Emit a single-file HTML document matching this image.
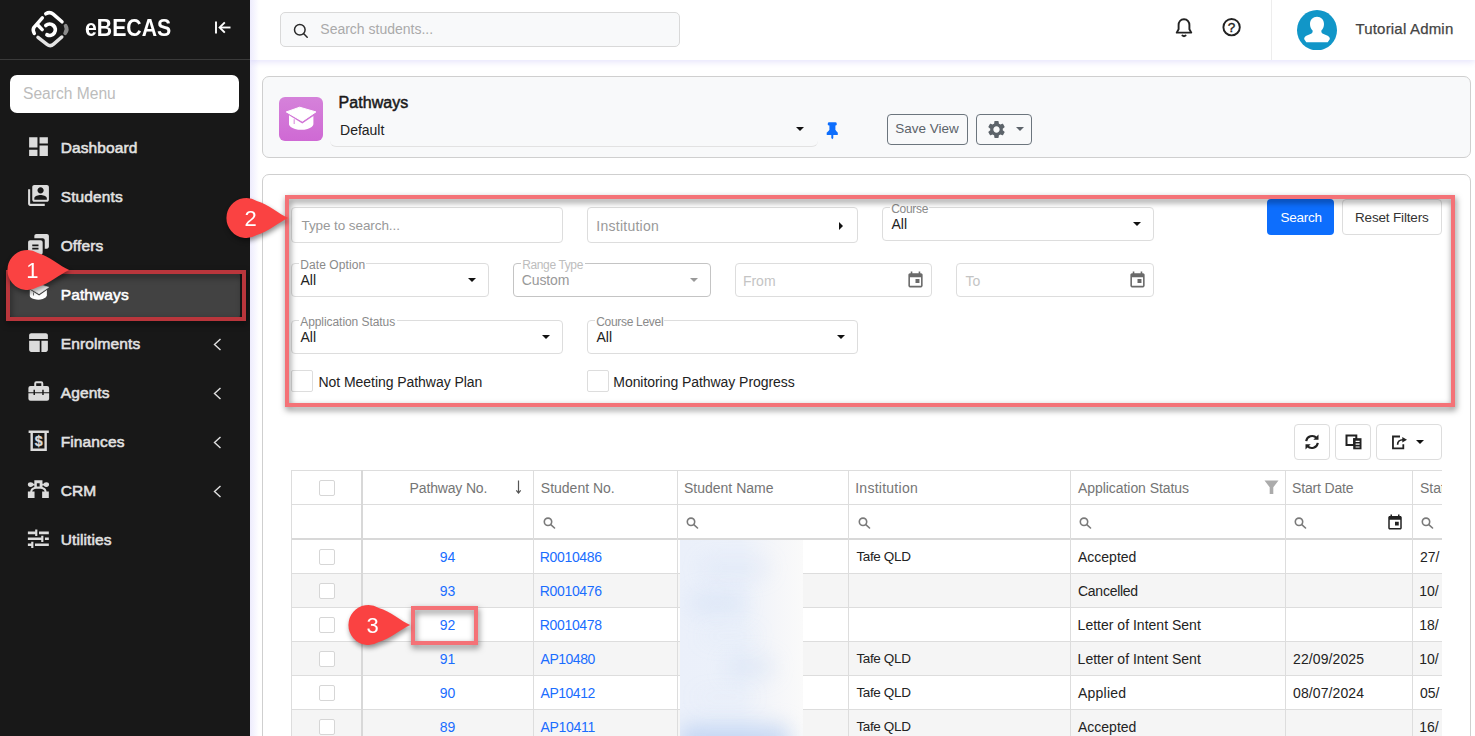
<!DOCTYPE html>
<html lang="en">
<head>
<meta charset="utf-8">
<title>eBECAS - Pathways</title>
<style>
*{box-sizing:border-box;margin:0;padding:0}
html,body{width:1475px;height:736px;overflow:hidden;background:#fff;font-family:"Liberation Sans",sans-serif;}
.abs{position:absolute}
.t{position:absolute;white-space:nowrap;line-height:1}
#sidebar{position:absolute;left:0;top:0;width:250px;height:736px;background:#181818;overflow:hidden}
#sidebar .hdrline{position:absolute;left:0;top:59px;width:250px;height:1px;background:#3a3a3a}
#smenu{position:absolute;left:10px;top:75px;width:229px;height:38px;background:#fff;border-radius:7px;}
.mi{position:absolute;left:60.700px;font-weight:normal;font-size:15.500px;color:#e2e2e2;-webkit-text-stroke:0.550px #e2e2e2;white-space:nowrap;line-height:1;letter-spacing:0.120px}
.ico{position:absolute;left:25.700px;width:25px;height:25px;fill:#dcdcdc}
.chev{position:absolute;left:213px;width:9px;height:13px;fill:none;stroke:#e0e0e0;stroke-width:1.4}
#active{position:absolute;left:10px;top:272px;width:230px;height:47px;background:#424242;border-radius:4px}
#main{position:absolute;left:250px;top:0;width:1225px;height:736px;background:#fff;overflow:hidden}

#topbar{position:absolute;left:0;top:0;width:1225px;height:60px;background:#fff;box-shadow:0 2px 6px rgba(120,110,240,0.19);}
#sbshadow{position:absolute;left:0;top:0;width:9px;height:736px;background:linear-gradient(to right,rgba(120,110,240,0.13),rgba(120,110,240,0));}
#search{position:absolute;left:30px;top:12px;width:400px;height:35px;border:1px solid #d9d9d9;border-radius:5px;background:#f8f9fa}
.card{position:absolute;border:1px solid #cfcfcf;border-radius:7px}
.btn{position:absolute;border-radius:4px}
.fld{position:absolute;border:1px solid #ddd;border-radius:4px;background:#fff}
.lbl{position:absolute;white-space:nowrap;line-height:1;font-size:12px;color:#8a8a8a;background:#fff;padding:0 1px}
.val{position:absolute;white-space:nowrap;line-height:1;font-size:14px;color:#222}
.caret{position:absolute;width:0;height:0;border-left:4px solid transparent;border-right:4px solid transparent;border-top:4.500px solid #111}
.cb{position:absolute;width:22px;height:22px;border:1px solid #ddd;border-radius:2px;background:#fff}

.hl{position:absolute;left:0;width:1200px;height:1px;background:#ddd}
.vl{position:absolute;top:0;width:1px;height:300px;background:#ddd}
.lnk{color:#1a6dff}
.dk{color:#232323}

.ann{position:absolute;border:4px solid #f47277;filter:drop-shadow(1px 3px 3px rgba(0,0,0,0.5));pointer-events:none}
.badge{position:absolute;width:70px;height:48px;overflow:visible;filter:drop-shadow(1px 3px 2.500px rgba(0,0,0,0.42))}
</style>
</head>
<body>
<div id="main">
  <div id="topbar">
    <div id="search">
      <svg class="abs" style="left:11.500px;top:9.500px" width="16" height="16" viewBox="0 0 16 16" fill="none" stroke="#2a2a2a" stroke-width="1.500" stroke-linecap="round"><circle cx="6.800" cy="6.800" r="5.300"/><path d="M10.800 10.800 L14.200 14.200"/></svg>
      <div class="t" id="sst" style="left:39.30px;top:8.700px;font-size:14px;color:#aaa;letter-spacing:0.000px">Search students...</div>
    </div>
    <svg class="abs" style="left:924px;top:16.500px" width="20" height="22" viewBox="0 0 20 22" fill="none" stroke="#222" stroke-width="1.900" stroke-linejoin="round" stroke-linecap="round"><path d="M10 2.300 C6.400 2.300 4.600 5 4.600 8 V12.300 L2.700 15.600 H17.300 L15.400 12.300 V8 C15.400 5 13.600 2.300 10 2.300 Z"/><path d="M8.400 18.600 Q10 19.800 11.600 18.600"/></svg>
    <svg class="abs" style="left:971px;top:17px" width="22" height="22" viewBox="0 0 22 22"><circle cx="10.600" cy="10.200" r="8.200" fill="none" stroke="#222" stroke-width="1.900"/><text x="10.600" y="14.900" font-family="Liberation Sans, sans-serif" font-size="13.500" text-anchor="middle" fill="#222" stroke="#222" stroke-width="0.400">?</text></svg>
    <div class="abs" style="left:1021px;top:0;width:1px;height:60px;background:#ededed"></div>
    <svg class="abs" style="left:1047.100px;top:10px" width="40" height="40.400" viewBox="0 0 40 40.400"><ellipse cx="20" cy="20.200" rx="20" ry="20.200" fill="#1196c8"/><path d="M20 6.700c-4 0-7 3-7 7.200 0 2.600 1 5 2.600 6.600.3 1.400-.3 2.600-1.600 3.300-2.200 1-5 1.600-6.400 3.400l-.5 1.800 2.200 3.300h21.400l2.200-3.300-.5-1.800c-1.400-1.800-4.200-2.400-6.400-3.400-1.300-.7-1.900-1.900-1.600-3.300 1.600-1.600 2.600-4 2.600-6.600 0-4.200-3-7.200-7-7.200z" fill="#fff"/></svg>
    <div class="t" id="tadmin" style="left:1105.40px;top:21px;font-size:15px;color:#444;letter-spacing:0.195px;-webkit-text-stroke:0.250px #444">Tutorial Admin</div>
  </div>

  <div id="sbshadow"></div>
  <div class="card" id="card1" style="left:12px;top:76px;width:1209px;height:82px;background:#f8f9fa">
    <div class="abs" style="left:16px;top:20px;width:44px;height:44px;border-radius:6px;background:linear-gradient(#d582da,#cf69d4)"></div>
    <svg class="abs" style="left:12px;top:16px" width="52" height="52" viewBox="0 0 52 52"><path d="M11.300 18.900 L24.700 14.200 L40.900 18.900 L27.300 28.200 Z" fill="#fff" stroke="#fff" stroke-width="1" stroke-linejoin="round"/><path d="M14 22.200 L27.300 30.600 L38.400 23 V31.200 Q37.800 34.200 32.500 35.900 Q26.200 37.800 20 35.900 Q14.600 34.200 14 31.400 Z" fill="#fff"/><path d="M18.700 26.300 h0.900 v4.600 h-0.900z" fill="#d373d7"/></svg>
    <div class="t" id="ptitle" style="left:75.60px;top:17.700px;font-size:16px;font-weight:normal;-webkit-text-stroke:0.500px #1a1a1a;color:#1a1a1a;letter-spacing:0.059px">Pathways</div>
    <div class="abs" style="left:67px;top:36px;width:488px;height:34px;border-bottom:1px solid #e2e2e2;border-radius:0 0 6px 6px"></div>
    <div class="t" id="pdef" style="left:77.10px;top:45.500px;font-size:14px;color:#222;letter-spacing:-0.028px">Default</div>
    <div class="caret" style="left:533px;top:50px"></div>
    <svg class="abs" style="left:563px;top:44px" width="13" height="19" viewBox="0 0 13 19" fill="#0d6efd"><rect x="1.800" y="1.200" width="8.900" height="3.400" rx="1.400"/><rect x="3.400" y="3" width="6" height="8"/><path d="M3.400 9 L0.700 11.800 V13.400 Q0.700 14 1.300 14 H11.200 Q11.800 14 11.800 13.400 V11.800 L9.400 9 Z"/><path d="M5.300 14 H7.300 V17 L6.300 18.300 L5.300 17 Z"/></svg>
    <div class="btn" style="left:624px;top:36.500px;width:81px;height:31px;border:1px solid #6c757d;"><div class="t" id="svt" style="left:7.20px;top:7.500px;font-size:13.500px;color:#5c636a;letter-spacing:0.000px">Save View</div></div>
    <div class="btn" style="left:713px;top:36.500px;width:56px;height:31px;border:1px solid #6c757d;">
      <svg class="abs" style="left:9px;top:4.500px" width="21" height="21" viewBox="0 0 24 24" fill="#5c636a"><path d="M19.140 12.940c.04-.3.060-.61.060-.94 0-.32-.02-.64-.07-.94l2.030-1.580a.49.490 0 0 0 .12-.61l-1.920-3.320a.488.488 0 0 0-.59-.22l-2.390.96c-.5-.38-1.030-.7-1.620-.94l-.36-2.540a.484.484 0 0 0-.48-.41h-3.840c-.24 0-.43.170-.47.410l-.36 2.540c-.59.240-1.130.57-1.620.94l-2.390-.96c-.22-.08-.47 0-.59.220L2.740 8.870c-.12.210-.08.470.12.610l2.030 1.580c-.05.300-.09.630-.09.940s.02.640.07.940l-2.030 1.580a.49.490 0 0 0-.12.610l1.920 3.320c.12.220.37.290.59.220l2.390-.96c.5.380 1.030.7 1.620.94l.36 2.540c.05.240.24.410.48.410h3.840c.24 0 .44-.17.470-.41l.36-2.540c.59-.24 1.130-.56 1.620-.94l2.390.96c.22.080.47 0 .59-.22l1.920-3.320c.12-.22.070-.47-.12-.61l-2.010-1.580zM12 15.600c-1.980 0-3.600-1.620-3.600-3.600s1.620-3.600 3.600-3.600 3.600 1.620 3.600 3.600-1.620 3.600-3.600 3.600z"/></svg>
      <div class="caret" style="left:38.500px;top:12.500px;border-top-color:#5c636a"></div>
    </div>
  </div>

  <div class="card" id="card2" style="left:12px;top:174px;width:1209px;height:600px;background:#fff">
  </div>
<!--BODYFRAG-->
<!-- filters -->
<div class="fld" style="left:41px;top:207px;width:272px;height:36px;"><div class="t" id="f_tts" style="left:9.50px;top:10.500px;font-size:13.500px;color:#999;letter-spacing:-0.088px">Type to search...</div></div>
<div class="fld" style="left:337px;top:207px;width:271px;height:36px;"><div class="t" id="f_inst" style="left:8.30px;top:10.500px;font-size:14px;color:#999;letter-spacing:0.260px">Institution</div><div class="abs" style="left:251px;top:13.500px;width:0;height:0;border-top:4px solid transparent;border-bottom:4px solid transparent;border-left:4.500px solid #111"></div></div>
<div class="fld" style="left:632px;top:207px;width:272px;height:34px;"><div class="abs" style="left:6.500px;top:-1px;width:39.5px;height:1px;background:#fff"></div><div class="t" id="l_course" style="left:8.200px;top:-5.200px;font-size:12px;letter-spacing:-0.3px;color:#8a8a8a">Course</div><div class="t" id="v_course" style="left:8.5px;top:9px;font-size:14px;letter-spacing:0px;color:#222">All</div><div class="caret" style="left:250px;top:14px;border-top-color:#111"></div></div>
<div class="fld" style="left:41px;top:263px;width:198px;height:34px;"><div class="abs" style="left:6.500px;top:-1px;width:67.5px;height:1px;background:#fff"></div><div class="t" id="l_dateopt" style="left:8.200px;top:-5.200px;font-size:12px;letter-spacing:0.1px;color:#8a8a8a">Date Option</div><div class="t" id="v_dateopt" style="left:8.5px;top:9px;font-size:14px;letter-spacing:0px;color:#222">All</div><div class="caret" style="left:176px;top:14px;border-top-color:#111"></div></div>
<div class="fld" style="left:263px;top:263px;width:198px;height:34px;border-color:#c4c4c4;"><div class="abs" style="left:6.500px;top:-1px;width:64.5px;height:1px;background:#fff"></div><div class="t" id="l_range" style="left:8.200px;top:-5.200px;font-size:12px;letter-spacing:-0.37px;color:#bdbdbd">Range Type</div><div class="t" id="v_range" style="left:7.8px;top:9px;font-size:14px;letter-spacing:-0.14px;color:#999">Custom</div><div class="caret" style="left:176px;top:14px;border-top-color:#999"></div></div>
<div class="fld" style="left:485px;top:263px;width:197px;height:34px;"><div class="t" id="f_from" style="left:6.90px;top:9.500px;font-size:14px;color:#c4c4c4;letter-spacing:0.000px">From</div><svg class="abs" style="left:170px;top:6px" width="19" height="19" viewBox="0 0 24 24" fill="#6a6a6a"><path d="M19 4h-1V2h-2v2H8V2H6v2H5c-1.110 0-1.990.9-1.990 2L3 20c0 1.100.89 2 2 2h14c1.100 0 2-.9 2-2V6c0-1.100-.9-2-2-2zm0 16H5V9h14v11zm-7-8.500h5v5h-5z" transform="translate(0,0)"/></svg></div>
<div class="fld" style="left:706px;top:263px;width:198px;height:34px;"><div class="t" id="f_to" style="left:8.50px;top:9.500px;font-size:14px;color:#c4c4c4;letter-spacing:0.000px">To</div><svg class="abs" style="left:171px;top:6px" width="19" height="19" viewBox="0 0 24 24" fill="#6a6a6a"><path d="M19 4h-1V2h-2v2H8V2H6v2H5c-1.110 0-1.990.9-1.990 2L3 20c0 1.100.89 2 2 2h14c1.100 0 2-.9 2-2V6c0-1.100-.9-2-2-2zm0 16H5V9h14v11zm-7-8.500h5v5h-5z" transform="translate(0,0)"/></svg></div>
<div class="fld" style="left:41px;top:320px;width:272px;height:34px;"><div class="abs" style="left:6.500px;top:-1px;width:98.5px;height:1px;background:#fff"></div><div class="t" id="l_appst" style="left:8.200px;top:-5.200px;font-size:12px;letter-spacing:-0.06px;color:#8a8a8a">Application Status</div><div class="t" id="v_appst" style="left:8.5px;top:9px;font-size:14px;letter-spacing:0px;color:#222">All</div><div class="caret" style="left:250px;top:14px;border-top-color:#111"></div></div>
<div class="fld" style="left:337px;top:320px;width:271px;height:34px;"><div class="abs" style="left:6.500px;top:-1px;width:69.9px;height:1px;background:#fff"></div><div class="t" id="l_clevel" style="left:8.200px;top:-5.200px;font-size:12px;letter-spacing:-0.3px;color:#8a8a8a">Course Level</div><div class="t" id="v_clevel" style="left:8.5px;top:9px;font-size:14px;letter-spacing:0px;color:#222">All</div><div class="caret" style="left:249px;top:14px;border-top-color:#111"></div></div>
<div class="cb" style="left:41px;top:370px"></div><div class="t" id="c_nm" style="left:68.50px;top:375px;font-size:14px;color:#222;letter-spacing:-0.052px">Not Meeting Pathway Plan</div>
<div class="cb" style="left:337px;top:370px"></div><div class="t" id="c_mp" style="left:363.30px;top:375px;font-size:14px;color:#222;letter-spacing:-0.054px">Monitoring Pathway Progress</div>
<div class="btn" style="left:1017px;top:199px;width:67px;height:36px;background:#0d6efd"><div class="t" id="b_search" style="left:13.50px;top:11.500px;font-size:13.500px;color:#fff;letter-spacing:-0.240px">Search</div></div>
<div class="btn" style="left:1092px;top:199px;width:100px;height:36px;background:#fff;border:1px solid #ddd"><div class="t" id="b_reset" style="left:12.00px;top:10.500px;font-size:13.500px;color:#333;letter-spacing:-0.167px">Reset Filters</div></div>
<!-- toolbar -->
<div class="btn" style="left:1044px;top:424px;width:36px;height:36px;background:#fff;border:1px solid #ddd"><svg class="abs" style="left:9px;top:8.600px" width="16" height="16" viewBox="0 0 16 16" fill="none" stroke="#222" stroke-width="2.100"><path d="M2.200 7.200 A6 6 0 0 1 12.600 4"/><path d="M13.800 8.800 A6 6 0 0 1 3.400 12"/><path d="M14.500 0.600 V5.800 H9.300 Z" fill="#222" stroke="none"/><path d="M1.500 15.400 V10.200 H6.700 Z" fill="#222" stroke="none"/></svg></div>
<div class="btn" style="left:1085px;top:424px;width:36px;height:36px;background:#fff;border:1px solid #ddd"><svg class="abs" style="left:8.600px;top:9.400px" width="18" height="17" viewBox="0 0 18 17"><path d="M1.500 1.500h9.800v9.500H1.500z" fill="none" stroke="#222" stroke-width="2"/><path d="M8.200 4.200h8.300v11.100H8.200z" fill="#222"/><path d="M8.200 4.200h3.100v6.800H8.200z" fill="#222"/><path d="M10.600 6.800h4v1.200h-4zM10.600 9.600h4v1.200h-4zM10.600 12.400h4v1.200h-4z" fill="#fff"/></svg></div>
<div class="btn" style="left:1126px;top:424px;width:66px;height:36px;background:#fff;border:1px solid #ddd"><svg class="abs" style="left:14px;top:9.500px" width="17" height="15" viewBox="0 0 17 15" fill="none" stroke="#222" stroke-width="1.800"><path d="M9 1.500H1.960V13.400H12.300V9.300"/><path d="M6.600 9.800C6.600 6.500 8.500 4.750 12 4.750" stroke-width="1.700"/><path d="M11.300 2.100L16 4.750 11.300 7.400z" fill="#222" stroke="none"/></svg><div class="caret" style="left:38.500px;top:14.500px"></div></div>
<!-- table -->
<div id="grid" style="position:absolute;left:41px;top:470px;width:1151px;height:280px;overflow:hidden;font-size:14px">
<div class="abs" style="left:0;top:70px;width:1151px;height:34px;background:#fff"></div>
<div class="abs" style="left:0;top:104px;width:1151px;height:34px;background:#f5f5f5"></div>
<div class="abs" style="left:0;top:138px;width:1151px;height:34px;background:#fff"></div>
<div class="abs" style="left:0;top:172px;width:1151px;height:34px;background:#f5f5f5"></div>
<div class="abs" style="left:0;top:206px;width:1151px;height:34px;background:#fff"></div>
<div class="abs" style="left:0;top:240px;width:1151px;height:34px;background:#f5f5f5"></div>
<div class="hl" style="top:0px"></div>
<div class="hl" style="top:34px"></div>
<div class="hl" style="top:68px;height:2px;background:#d8d8d8"></div>
<div class="hl" style="top:103px"></div>
<div class="hl" style="top:137px"></div>
<div class="hl" style="top:171px"></div>
<div class="hl" style="top:205px"></div>
<div class="hl" style="top:239px"></div>
<div id="blur" style="position:absolute;left:389px;top:70px;width:123px;height:200px;overflow:hidden;background:linear-gradient(to right,#ebf0fa 0%,#ecf1fa 50%,#f5f6f9 78%,#fafafa 100%)">
<div class="abs" style="left:20px;top:18px;width:70px;height:20px;border-radius:10px;background:rgba(175,200,240,0.14);filter:blur(10px)"></div>
<div class="abs" style="left:10px;top:52px;width:55px;height:22px;border-radius:10px;background:rgba(175,200,240,0.22);filter:blur(10px)"></div>
<div class="abs" style="left:20px;top:88px;width:60px;height:16px;border-radius:10px;background:rgba(175,200,240,0.06);filter:blur(10px)"></div>
<div class="abs" style="left:45px;top:116px;width:50px;height:22px;border-radius:10px;background:rgba(175,200,240,0.2);filter:blur(10px)"></div>
<div class="abs" style="left:15px;top:150px;width:60px;height:14px;border-radius:10px;background:rgba(175,200,240,0.05);filter:blur(10px)"></div>
<div class="abs" style="left:0px;top:185px;width:110px;height:40px;border-radius:10px;background:rgba(175,200,240,0.62);filter:blur(10px)"></div>
</div>
<div class="vl" style="left:0"></div>
<div class="vl" style="left:70px;width:2px;background:#d8d8d8"></div>
<div class="vl" style="left:242px"></div>
<div class="vl" style="left:386px"></div>
<div class="vl" style="left:557px"></div>
<div class="vl" style="left:779px"></div>
<div class="vl" style="left:994px"></div>
<div class="vl" style="left:1121px"></div>
<div class="cb" style="left:28px;top:10px;width:16px;height:16px;border-color:#d6d6d6"></div>
<div class="cb" style="left:28px;top:78.5px;width:16px;height:16px;border-color:#d6d6d6"></div>
<div class="cb" style="left:28px;top:112.5px;width:16px;height:16px;border-color:#d6d6d6"></div>
<div class="cb" style="left:28px;top:146.5px;width:16px;height:16px;border-color:#d6d6d6"></div>
<div class="cb" style="left:28px;top:180.5px;width:16px;height:16px;border-color:#d6d6d6"></div>
<div class="cb" style="left:28px;top:214.5px;width:16px;height:16px;border-color:#d6d6d6"></div>
<div class="cb" style="left:28px;top:248.5px;width:16px;height:16px;border-color:#d6d6d6"></div>
<div class="t" id="h_pno" style="left:118.60px;top:10.5px;color:#757575;font-size:14px;letter-spacing:-0.160px">Pathway No.</div>
<div class="t" id="h_sno" style="left:249.80px;top:10.5px;color:#757575;font-size:14px;letter-spacing:0.000px">Student No.</div>
<div class="t" id="h_sname" style="left:393.00px;top:10.5px;color:#757575;font-size:14px;letter-spacing:0.000px">Student Name</div>
<div class="t" id="h_inst" style="left:564.20px;top:10.5px;color:#757575;font-size:14px;letter-spacing:0.260px">Institution</div>
<div class="t" id="h_app" style="left:787.00px;top:10.5px;color:#757575;font-size:14px;letter-spacing:-0.059px">Application Status</div>
<div class="t" id="h_sd" style="left:1001.00px;top:10.5px;color:#757575;font-size:14px;letter-spacing:-0.156px">Start Date</div>
<div class="t" id="h_std" style="left:1129px;top:10.5px;color:#757575;font-size:14px">Status Date</div>
<svg class="abs" style="left:223px;top:9px" width="9" height="16" viewBox="0 0 9 16" fill="none" stroke="#555" stroke-width="1.200"><path d="M4.500 1.500V14"/><path d="M2.300 11.300L4.500 14 6.700 11.300"/></svg>
<svg class="abs" style="left:972.5px;top:10px" width="15" height="15" viewBox="0 0 15 15" fill="#ababab"><path d="M0.500 0.500h14L9.300 7.200v6.800H5.700V7.200z"/></svg>
<svg class="abs" style="left:251.5px;top:47px" width="13" height="12" viewBox="0 0 13 12" fill="none" stroke="#7a7a7a" stroke-width="1.600" stroke-linecap="round"><circle cx="5" cy="4.800" r="3.700"/><path d="M7.800 7.600L11.500 11"/></svg>
<svg class="abs" style="left:395px;top:47px" width="13" height="12" viewBox="0 0 13 12" fill="none" stroke="#7a7a7a" stroke-width="1.600" stroke-linecap="round"><circle cx="5" cy="4.800" r="3.700"/><path d="M7.800 7.600L11.500 11"/></svg>
<svg class="abs" style="left:566.5px;top:47px" width="13" height="12" viewBox="0 0 13 12" fill="none" stroke="#7a7a7a" stroke-width="1.600" stroke-linecap="round"><circle cx="5" cy="4.800" r="3.700"/><path d="M7.800 7.600L11.500 11"/></svg>
<svg class="abs" style="left:788px;top:47px" width="13" height="12" viewBox="0 0 13 12" fill="none" stroke="#7a7a7a" stroke-width="1.600" stroke-linecap="round"><circle cx="5" cy="4.800" r="3.700"/><path d="M7.800 7.600L11.500 11"/></svg>
<svg class="abs" style="left:1003px;top:47px" width="13" height="12" viewBox="0 0 13 12" fill="none" stroke="#7a7a7a" stroke-width="1.600" stroke-linecap="round"><circle cx="5" cy="4.800" r="3.700"/><path d="M7.800 7.600L11.500 11"/></svg>
<svg class="abs" style="left:1130px;top:47px" width="13" height="12" viewBox="0 0 13 12" fill="none" stroke="#7a7a7a" stroke-width="1.600" stroke-linecap="round"><circle cx="5" cy="4.800" r="3.700"/><path d="M7.800 7.600L11.500 11"/></svg>
<svg class="abs" style="left:1095px;top:42.5px" width="18" height="18" viewBox="0 0 24 24" fill="#222"><path d="M19 4h-1V2h-2v2H8V2H6v2H5c-1.110 0-1.990.9-1.990 2L3 20c0 1.100.89 2 2 2h14c1.100 0 2-.9 2-2V6c0-1.100-.9-2-2-2zm0 16H5V9h14v11zm-7-8.500h5v5h-5z"/></svg>
<div class="t lnk" id="d_pn0" style="left:71px;width:171px;text-align:center;top:80.20000000000005px">94</div>
<div class="t lnk" id="d_sn0" style="left:248.80px;top:80.20000000000005px;letter-spacing:-0.343px">R0010486</div>
<div class="t dk" id="d_in0" style="left:565.40px;top:80.40000000000005px;font-size:13.500px;letter-spacing:-0.357px">Tafe QLD</div>
<div class="t dk" id="d_st0" style="left:787.00px;top:80.20000000000005px;letter-spacing:0.000px">Accepted</div>
<div class="t dk" id="d_sx0" style="left:1129.00px;top:80.20000000000005px;letter-spacing:0.000px">27/</div>
<div class="t lnk" id="d_pn1" style="left:71px;width:171px;text-align:center;top:114.20000000000005px">93</div>
<div class="t lnk" id="d_sn1" style="left:248.80px;top:114.20000000000005px;letter-spacing:-0.343px">R0010476</div>
<div class="t dk" id="d_st1" style="left:787.00px;top:114.20000000000005px;letter-spacing:-0.263px">Cancelled</div>
<div class="t dk" id="d_sx1" style="left:1128.30px;top:114.20000000000005px;letter-spacing:0.000px">10/</div>
<div class="t lnk" id="d_pn2" style="left:71px;width:171px;text-align:center;top:148.20000000000005px">92</div>
<div class="t lnk" id="d_sn2" style="left:248.80px;top:148.20000000000005px;letter-spacing:-0.343px">R0010478</div>
<div class="t dk" id="d_st2" style="left:786.60px;top:148.20000000000005px;letter-spacing:0.010px">Letter of Intent Sent</div>
<div class="t dk" id="d_sx2" style="left:1128.30px;top:148.20000000000005px;letter-spacing:0.000px">18/</div>
<div class="t lnk" id="d_pn3" style="left:71px;width:171px;text-align:center;top:182.20000000000005px">91</div>
<div class="t lnk" id="d_sn3" style="left:249.60px;top:182.20000000000005px;letter-spacing:-0.500px">AP10480</div>
<div class="t dk" id="d_in3" style="left:565.40px;top:182.40000000000003px;font-size:13.500px;letter-spacing:-0.357px">Tafe QLD</div>
<div class="t dk" id="d_st3" style="left:786.60px;top:182.20000000000005px;letter-spacing:0.010px">Letter of Intent Sent</div>
<div class="t dk" id="d_sd3" style="left:1002.00px;top:182.20000000000005px;letter-spacing:0.100px">22/09/2025</div>
<div class="t dk" id="d_sx3" style="left:1128.30px;top:182.20000000000005px;letter-spacing:0.000px">10/</div>
<div class="t lnk" id="d_pn4" style="left:71px;width:171px;text-align:center;top:216.20000000000005px">90</div>
<div class="t lnk" id="d_sn4" style="left:249.60px;top:216.20000000000005px;letter-spacing:-0.500px">AP10412</div>
<div class="t dk" id="d_in4" style="left:565.40px;top:216.40000000000003px;font-size:13.500px;letter-spacing:-0.357px">Tafe QLD</div>
<div class="t dk" id="d_st4" style="left:787.00px;top:216.20000000000005px;letter-spacing:0.233px">Applied</div>
<div class="t dk" id="d_sd4" style="left:1002.00px;top:216.20000000000005px;letter-spacing:0.100px">08/07/2024</div>
<div class="t dk" id="d_sx4" style="left:1129.00px;top:216.20000000000005px;letter-spacing:0.000px">05/</div>
<div class="t lnk" id="d_pn5" style="left:71px;width:171px;text-align:center;top:250.20000000000005px">89</div>
<div class="t lnk" id="d_sn5" style="left:249.60px;top:250.20000000000005px;letter-spacing:-0.333px">AP10411</div>
<div class="t dk" id="d_in5" style="left:565.40px;top:250.40000000000003px;font-size:13.500px;letter-spacing:-0.357px">Tafe QLD</div>
<div class="t dk" id="d_st5" style="left:787.00px;top:250.20000000000005px;letter-spacing:0.000px">Accepted</div>
<div class="t dk" id="d_sx5" style="left:1128.30px;top:250.20000000000005px;letter-spacing:0.000px">16/</div>
</div>
<!--/BODYFRAG-->
</div>
<div id="sidebar">
  <div class="hdrline"></div>
  <svg class="abs" style="left:25px;top:5px" width="50" height="50" viewBox="0 0 50 50">
    <g fill="none" stroke-linecap="round" stroke-linejoin="round" stroke-width="3.500">
      <path d="M20.800 8.800 Q24.800 6.300 28.200 9.200 L37 16.800" stroke="#fff"/>
      <path d="M40.600 20.800 Q43 24.500 40.200 28.200" stroke="#8a8a8a" stroke-width="3.800"/>
      <path d="M13 32.300 L22 39.300 Q25.300 42 28.600 39.200 L36.800 32" stroke="#e4e4e4"/>
      <path d="M17.300 12.800 L9 22.300 Q7.300 24.800 9.300 28.500" stroke="#fff"/>
      <path d="M13 20.200 L17.200 24.600" stroke="#fff"/>
      <path d="M20.900 20.400 A5.700 5.700 0 1 1 22 29.800" stroke="#fff" stroke-width="3.800"/>
    </g>
  </svg>
  <div class="t" id="brand" style="left:85px;top:15.5px;font-size:24px;font-weight:bold;color:#fff;transform:scaleX(0.885);transform-origin:0 0">eBECAS</div>
  <svg class="abs" style="left:214px;top:20px" width="18" height="15" viewBox="0 0 18 15" fill="none" stroke="#fff" stroke-width="1.900">
    <path d="M2 1.500 V13.500"/><path d="M16.500 7.500 H6"/><path d="M10.800 2.300 L5.600 7.500 L10.800 12.700"/>
  </svg>
  <div id="smenu"><div class="t" style="left:13px;top:11px;font-size:15.600px;color:#bcbcbc">Search Menu</div></div>

  <div id="active"></div>

  <svg class="ico" style="top:133.800px" viewBox="0 0 24 24"><path d="M3 13h8V3H3v10zm0 8h8v-6H3v6zm10 0h8V11h-8v10zm0-18v6h8V3h-8z"/></svg>
  <svg class="ico" style="top:182.700px" viewBox="0 0 24 24"><path d="M4 6H2v14c0 1.100.9 2 2 2h14v-2H4V6zm16-4H8c-1.100 0-2 .9-2 2v12c0 1.100.9 2 2 2h12c1.100 0 2-.9 2-2V4c0-1.100-.9-2-2-2zm-6 2c1.660 0 3 1.340 3 3s-1.340 3-3 3-3-1.340-3-3 1.340-3 3-3zm6 12H8v-1.500c0-1.990 4-3 6-3s6 1.010 6 3V16z"/></svg>
  <svg class="ico" style="left:25.600px;top:231.700px" viewBox="0 0 24 24"><path d="M10 2h10c1.100 0 2 .9 2 2v10c0 1.100-.9 2-2 2h-2V8c0-1.100-.9-2-2-2H8V4c0-1.100.9-2 2-2z"/><path d="M4 8h10c1.100 0 2 .9 2 2v10c0 1.100-.9 2-2 2H4c-1.100 0-2-.9-2-2V10c0-1.100.9-2 2-2zm2 4v1.600h6V12H6zm0 3.200v1.600h6v-1.600H6z" fill-rule="evenodd"/></svg>
  <svg class="abs" style="left:19.900px;top:273.500px" width="36.400" height="36.400" viewBox="0 0 52 52"><path d="M11.300 18.900 L24.700 14.200 L40.900 18.900 L27.300 28.200 Z" fill="#fff" stroke="#fff" stroke-width="1" stroke-linejoin="round"/><path d="M14 22.200 L27.300 30.600 L38.400 23 V31.200 Q37.800 34.200 32.500 35.900 Q26.200 37.800 20 35.900 Q14.600 34.200 14 31.400 Z" fill="#fff"/><path d="M18.700 26.300 h1.100 v4.600 h-1.100z" fill="#424242"/></svg>
  <svg class="ico" style="top:329.700px" viewBox="0 0 24 24"><path d="M5 3h14c1.100 0 2 .9 2 2v3.600H3V5c0-1.100.9-2 2-2zM3 10.400h10.200V21H5c-1.100 0-2-.9-2-2v-8.600zM14.800 10.400H21V19c0 1.100-.9 2-2 2h-4.200V10.400z"/></svg>
  <svg class="ico" style="top:378.700px" viewBox="0 0 24 24"><path d="M7.900 6.600V4.200Q7.900 2.200 9.900 2.200H14.600Q16.600 2.200 16.600 4.200V6.600H14.700V4.100H9.800V6.600Z"/><path d="M4.300 6.600H20.200Q22.200 6.600 22.200 8.600V12.800H17V10.400H15.600V12.800H8.600V10.400H7.200V12.800H2.300V8.600Q2.300 6.600 4.300 6.600ZM2.300 13.700H7.200V15.400H8.600V13.700H15.600V15.400H17V13.700H22.200V18.900Q22.200 20.900 20.200 20.900H4.300Q2.300 20.900 2.300 18.900Z"/></svg>
  <svg class="ico" style="top:427.700px" viewBox="0 0 24 24"><path d="M2.500 2.300H21.900V4.700H20V22H4.300V4.700H2.500ZM6.600 4.700V19.700H17.700V4.700Z" fill-rule="evenodd"/><text x="12.150" y="16.900" font-family="Liberation Sans, sans-serif" font-weight="bold" font-size="13.600" text-anchor="middle" stroke="#dcdcdc" stroke-width="0.300">$</text></svg>
  <svg class="ico" style="top:476.700px" viewBox="0 0 24 24"><path d="M8 3.200h7.800v8.100H8zM10.400 6.100v2.900h2.700V6.100z" fill-rule="evenodd"/><ellipse cx="4.400" cy="7.300" rx="2.600" ry="2.200"/><ellipse cx="19.500" cy="7.300" rx="2.600" ry="2.200"/><path d="M4.400 6.500h4v1.600h-4zM15.400 6.500h4v1.600h-4z"/><path d="M1.800 13.900h6.400v6.300H1.800zM15.500 13.900h6.400v6.300h-6.400z"/><path d="M9 10.400C6.500 10.900 5 12.400 5 14.500M14.800 10.400C17.300 10.900 18.800 12.400 18.800 14.500" fill="none" stroke="#dcdcdc" stroke-width="1.900"/></svg>
  <svg class="ico" style="top:525.700px" viewBox="0 0 24 24"><path d="M1.800 5.300h7v2.500h-7zM8.800 3.400h2.100v6.300H8.800zM12.500 5.300h9.400v2.500h-9.400zM1.800 11h12.800v2.500H1.800zM14.600 9.400h2.100v6H14.600zM18.200 11h3.700v2.500h-3.700zM1.800 16.800H5v2.500H1.800zM5 15.200h2.100v5.900H5zM8.600 16.800h13.300v2.500H8.600z"/></svg>

  <div class="mi" style="top:140px">Dashboard</div>
  <div class="mi" style="top:189px">Students</div>
  <div class="mi" style="top:238px">Offers</div>
  <div class="mi" style="top:287px;color:#fff;-webkit-text-stroke-color:#fff">Pathways</div>
  <div class="mi" style="top:336px">Enrolments</div>
  <div class="mi" style="top:385px">Agents</div>
  <div class="mi" style="top:434px">Finances</div>
  <div class="mi" style="top:483px">CRM</div>
  <div class="mi" style="top:532px">Utilities</div>

  <svg class="chev" style="top:337.500px" viewBox="0 0 9 13"><path d="M7.500 1 L1.500 6.500 L7.500 12"/></svg>
  <svg class="chev" style="top:386.500px" viewBox="0 0 9 13"><path d="M7.500 1 L1.500 6.500 L7.500 12"/></svg>
  <svg class="chev" style="top:435.500px" viewBox="0 0 9 13"><path d="M7.500 1 L1.500 6.500 L7.500 12"/></svg>
  <svg class="chev" style="top:484.500px" viewBox="0 0 9 13"><path d="M7.500 1 L1.500 6.500 L7.500 12"/></svg>
<div class="ann" style="left:6px;top:270px;width:239.500px;height:51px;border-color:#b9363c"></div>
<svg class="badge" style="left:4.5px;top:248px" viewBox="0 0 70 48"><path d="M64.200 22 C55 18 44.500 8.300 32.800 4.900 A20 20 0 1 0 32.800 39.100 C44.500 35.700 55 26 64.200 22 Z" fill="#fa4242"/><text x="27.300" y="29.800" font-family="Liberation Sans, sans-serif" font-size="22" fill="#fff" text-anchor="middle">1</text></svg>
</div>
<!--ANN-->
<div class="ann" style="left:285px;top:195px;width:1170px;height:212px"></div>
<div class="ann" style="left:411px;top:606px;width:67px;height:39px"></div>
<svg class="badge" style="left:224px;top:196px" viewBox="0 0 70 48"><path d="M64.200 22 C55 18 44.500 8.300 32.800 4.900 A20 20 0 1 0 32.800 39.100 C44.500 35.700 55 26 64.200 22 Z" fill="#fa4242"/><text x="26.600" y="29.800" font-family="Liberation Sans, sans-serif" font-size="22" fill="#fff" text-anchor="middle">2</text></svg>
<svg class="badge" style="left:346px;top:603px" viewBox="0 0 70 48"><path d="M64.200 22 C55 18 44.500 8.300 32.800 4.900 A20 20 0 1 0 32.800 39.100 C44.500 35.700 55 26 64.200 22 Z" fill="#fa4242"/><text x="26.600" y="29.800" font-family="Liberation Sans, sans-serif" font-size="22" fill="#fff" text-anchor="middle">3</text></svg>
<!--/ANN-->
</body>
</html>
